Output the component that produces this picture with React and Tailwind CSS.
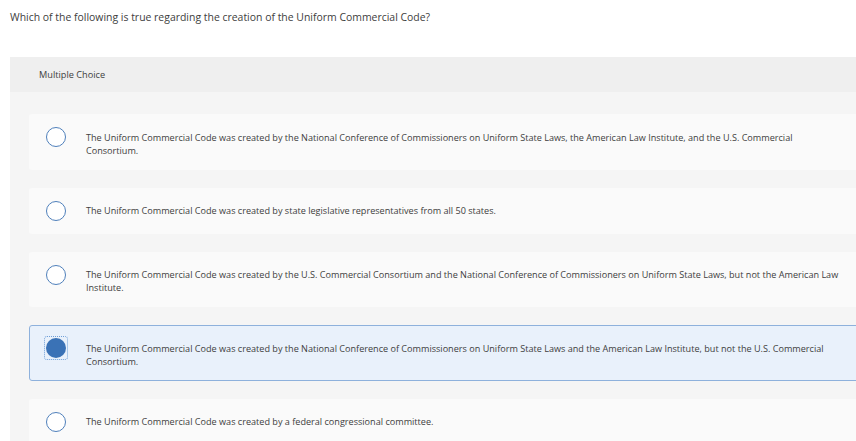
// each answer is stored as the lines it shows on screen
const options = [
  ['The Uniform Commercial Code was created by the National Conference of Commissioners on Uniform State Laws, the American Law Institute, and the U.S. Commercial', 'Consortium.'],
  ['The Uniform Commercial Code was created by state legislative representatives from all 50 states.'],
  ['The Uniform Commercial Code was created by the U.S. Commercial Consortium and the National Conference of Commissioners on Uniform State Laws, but not the American Law', 'Institute.'],
  ['The Uniform Commercial Code was created by the National Conference of Commissioners on Uniform State Laws and the American Law Institute, but not the U.S. Commercial', 'Consortium.'],
  ['The Uniform Commercial Code was created by a federal congressional committee.'],
];

const selected = 3;

export default function App() {
  return (
    <div className="w-[856px] h-[441px] overflow-hidden bg-white font-['Open_Sans',Arial,sans-serif] text-[#404040]">
      <p className="pl-[10px] pt-[10px] text-[10.45px] leading-[14px]">
        Which of the following is true regarding the creation of the Uniform Commercial Code?
      </p>

      <div className="ml-[10px] mt-[33px] w-[880px] bg-[#f5f5f5]">
        <div className="h-[35px] bg-[#efefef] pl-[29px] flex items-center text-[9.2px]">
          Multiple Choice
        </div>
        <div className="pl-[19px] pt-[22px] flex flex-col gap-[18px]">
          {options.map((lines, i) => {
            const isSel = i === selected;
            return (
              <div
                key={i}
                className={
                  isSel
                    ? 'flex items-start py-[12px] pl-[16px] pr-[40px] rounded-[3px] border border-[#8eb1dc] bg-[#e9f1fb]'
                    : 'flex items-start py-[13px] pl-[17px] pr-[41px] rounded-[3px] bg-[#fafafa]'
                }
              >
                {isSel ? (
                  <div className="w-[20px] h-[20px] shrink-0 outline outline-1 outline-dotted outline-[#6f9fd8] outline-offset-[1px] rounded-[1px]">
                    <div className="w-[20px] h-[20px] rounded-full bg-[#3a72b6]" />
                  </div>
                ) : (
                  <div className="w-[20px] h-[20px] shrink-0 rounded-full border-[1.5px] border-[#4f80bb] bg-white" />
                )}
                <p className="ml-[20px] mt-[3.5px] text-[9.1px] leading-[13px] whitespace-nowrap">
                  {lines.map((l, j) => (
                    <span key={j} className="block">{l}</span>
                  ))}
                </p>
              </div>
            );
          })}
        </div>
      </div>
    </div>
  );
}
